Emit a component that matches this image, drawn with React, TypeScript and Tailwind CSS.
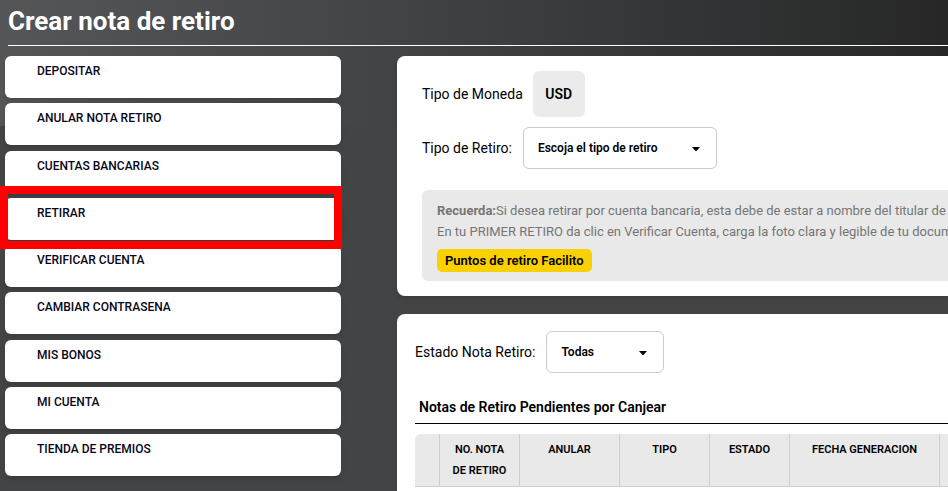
import React from "react";

const menu = [
  "DEPOSITAR",
  "ANULAR NOTA RETIRO",
  "CUENTAS BANCARIAS",
  "RETIRAR",
  "VERIFICAR CUENTA",
  "CAMBIAR CONTRASENA",
  "MIS BONOS",
  "MI CUENTA",
  "TIENDA DE PREMIOS",
];

const columns = [
  { label: "", width: "w-[25px]" },
  { label: "NO. NOTA DE RETIRO", width: "w-20" },
  { label: "ANULAR", width: "w-[100px]" },
  { label: "TIPO", width: "w-[90px]" },
  { label: "ESTADO", width: "w-20" },
  { label: "FECHA GENERACION", width: "w-[150px]" },
  { label: "", width: "" },
];

function Menu() {
  return (
    <nav className="w-[336px] shrink-0" aria-label="Cuenta">
      <ul className="flex h-[420px] flex-col justify-between">
        {menu.map((label) => (
          <li key={label} className="relative">
            <a
              href="#"
              className="block h-[42px] rounded-md bg-white px-8 pt-[5px] text-[12px] leading-5 font-medium text-[#060618] shadow-md"
            >
              {label}
            </a>
            {label === "RETIRAR" && (
              <span className="pointer-events-none absolute -top-3 -right-px -bottom-[9px] -left-[5px] z-10 border-8 border-[#ff0000]" />
            )}
          </li>
        ))}
      </ul>
    </nav>
  );
}

function Dropdown({ id, label, value, width }: { id: string; label: string; value: string; width: string }) {
  return (
    <div className="flex items-center gap-[11px]">
      <label htmlFor={id} className="text-[14px] leading-5">
        {label}
      </label>
      <div className={"relative " + width}>
        <select
          id={id}
          className="h-[42px] w-full appearance-none rounded-md border border-[#cbcbcb] bg-white pr-8 pl-3.5 text-[12px] font-semibold text-black"
        >
          <option>{value}</option>
        </select>
        <svg
          className="pointer-events-none absolute top-5 right-[17px] h-1 w-2"
          viewBox="0 0 8 4"
          aria-hidden="true"
        >
          <path d="M0 0h8L4.500 4h-1z" fill="#000" />
        </svg>
      </div>
    </div>
  );
}

export default function App() {
  return (
    <div className="min-h-screen overflow-hidden bg-[#434446] font-['Roboto','Liberation_Sans',sans-serif] text-black">
      <div className="bg-[linear-gradient(to_right,#555658,#434446_40%,#323334_75%,#262726)] bg-[length:100%_126px] bg-no-repeat">
        <header className="ml-2 border-b border-white">
          <h1 className="h-[45px] pt-1 text-[26px] leading-[34px] font-bold text-white">Crear nota de retiro</h1>
        </header>
        <main className="flex gap-14 pt-2.5 pl-[5px]">
          <Menu />
          <div className="flex min-w-0 flex-1 flex-col gap-[18px]">
            <section className="h-60 rounded-l-lg bg-white pt-[15px] pl-[25px] shadow-md">
              <div className="flex h-[46px] items-center gap-2.5">
                <span className="text-[14px] leading-5">Tipo de Moneda</span>
                <button type="button" className="h-[46px] w-[52px] rounded-md bg-[#ebebeb] text-[14px] font-semibold">
                  USD
                </button>
              </div>
              <div className="mt-2.5">
                <Dropdown id="tipo" label="Tipo de Retiro:" value="Escoja el tipo de retiro" width="w-[194px]" />
              </div>
              <div className="mt-[21px] h-[91px] rounded-l-md bg-[#e9e9e9] pt-2.5 pl-[15px] text-[13px] leading-[21px] whitespace-nowrap text-[#757575]">
                <p>
                  <strong>Recuerda:</strong>Si desea retirar por cuenta bancaria, esta debe de estar a nombre del titular de
                </p>
                <p>En tu PRIMER RETIRO da clic en Verificar Cuenta, carga la foto clara y legible de tu documento</p>
                <a
                  href="#"
                  className="mt-[7px] inline-block h-[23px] rounded-[5px] bg-[#f9d000] px-2 leading-[23px] font-semibold text-black"
                >
                  Puntos de retiro Facilito
                </a>
              </div>
            </section>
            <section className="min-h-[177px] overflow-hidden rounded-tl-lg bg-white pt-[17px] pl-[18px] shadow-md">
              <Dropdown id="estado" label="Estado Nota Retiro:" value="Todas" width="w-[118px]" />
              <h2 className="mt-6 border-b border-black pb-1.5 pl-1 text-[14px] leading-5 font-semibold">
                Notas de Retiro Pendientes por Canjear
              </h2>
              <table className="mt-2.5 w-full table-fixed border-separate border-spacing-0 text-[11px] leading-[21px]">
                <thead>
                  <tr>
                    {columns.map((c, i) => (
                      <th
                        key={i}
                        className={
                          "h-[53px] border-b border-[#d0d0d0] bg-[#e9e9e9] px-2 pt-[5px] align-top font-semibold first:rounded-tl-md not-last:border-r " +
                          c.width
                        }
                      >
                        {c.label}
                      </th>
                    ))}
                  </tr>
                </thead>
              </table>
            </section>
          </div>
        </main>
      </div>
    </div>
  );
}
